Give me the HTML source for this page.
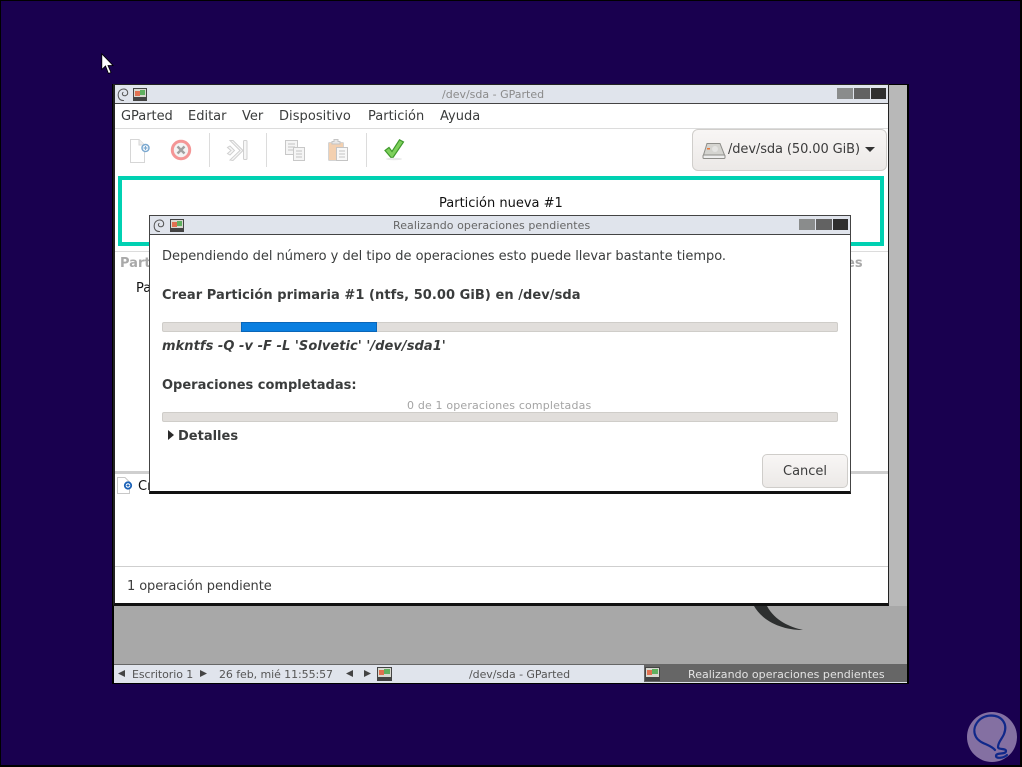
<!DOCTYPE html>
<html><head><meta charset="utf-8">
<style>
html,body{margin:0;padding:0;width:1022px;height:767px;overflow:hidden;background:#19004f}
body{position:relative;font-family:"DejaVu Sans",sans-serif;font-size:13px;color:#3a3c3c}
.a{position:absolute}
.t{position:absolute;white-space:nowrap;line-height:16px}
svg{position:absolute;overflow:visible}
</style></head><body>
<div class="a" style="left:0;top:0;width:1019px;height:764px;border:1px solid #000;border-width:1px 2px 2px 1px"></div>

<!-- VM desktop -->
<div class="a" style="left:112px;top:84px;width:797px;height:600px;background:#000"></div>
<div class="a" style="left:114px;top:85px;width:793px;height:598px;background:#b8b8b8"></div>
<div class="a" style="left:114px;top:606px;width:793px;height:58px;background:#a8a8a8"></div>
<svg style="left:0;top:0" width="1022" height="767"><path d="M754 606C762 620 780 630 803 630C790 627 775 621 767 606Z" fill="#2d2f2f"/></svg>

<!-- taskbar -->
<div class="a" style="left:114px;top:664px;width:793px;height:19px;background:#e0e4ec;border-top:1px solid #666;box-sizing:border-box"></div>
<div class="a" style="left:644px;top:665px;width:263px;height:17px;background:#666"></div>
<svg style="left:118px;top:670px" width="8" height="7"><path d="M0 3.500L7 0V7Z" fill="#444"/></svg>
<div class="t" style="left:132px;top:667px;font-size:11px;color:#555;letter-spacing:-.08px">Escritorio 1</div>
<svg style="left:200px;top:670px" width="8" height="7"><path d="M7 3.500L0 0V7Z" fill="#444"/></svg>
<div class="t" style="left:219px;top:667px;font-size:11px;color:#555;letter-spacing:-.08px">26 feb, mié 11:55:57</div>
<svg style="left:346px;top:670px" width="8" height="7"><path d="M0 3.500L7 0V7Z" fill="#444"/></svg>
<svg style="left:364px;top:670px" width="8" height="7"><path d="M7 3.500L0 0V7Z" fill="#444"/></svg>
<div class="t" style="left:469px;top:667px;font-size:11px;color:#555;letter-spacing:-.06px">/dev/sda - GParted</div>
<div class="t" style="left:688px;top:667px;font-size:11px;color:#e4e4e4;letter-spacing:.04px">Realizando operaciones pendientes</div>
<svg style="left:377px;top:667px" width="16" height="14"><rect width="15" height="14" fill="#444"/><rect x="1" y="1" width="13" height="9" fill="#d8d8d0"/><rect x="2" y="3" width="5" height="5" fill="#e07050"/><rect x="7" y="2" width="6" height="5" fill="#60b060"/></svg>
<svg style="left:645px;top:667px" width="16" height="14"><rect width="15" height="14" fill="#444"/><rect x="1" y="1" width="13" height="9" fill="#d8d8d0"/><rect x="2" y="3" width="5" height="5" fill="#e07050"/><rect x="7" y="2" width="6" height="5" fill="#60b060"/></svg>

<!-- main window -->
<div class="a" style="left:113px;top:84px;width:776px;height:522px;background:#fff;border:1px solid #222;border-bottom:3px solid #111;border-left-width:2px;border-right-width:1px;box-sizing:border-box"></div>
<div class="a" style="left:115px;top:85px;width:773px;height:18px;background:#e0e4ec;border-bottom:1px solid #444"></div>
<svg style="left:117px;top:88px" width="12" height="14" fill="none" stroke="#555" stroke-width="1"><path d="M7 12.500C3 13 1 10 1.200 6.500C1.400 3 4 .8 7 1C9.800 1.200 11 3.500 10.600 5.600C10.200 7.600 7.500 8.400 6 7.200C5 6.400 5.200 4.800 6.400 4.200"/></svg>
<svg style="left:133px;top:88px" width="14" height="13"><rect width="14" height="13" fill="#444"/><rect x="1" y="1" width="12" height="8" fill="#d8d8d0"/><rect x="2" y="3" width="5" height="5" fill="#e07050"/><rect x="7" y="2" width="5" height="5" fill="#60b060"/></svg>
<div class="t" style="left:442px;top:87px;font-size:11px;color:#8a8a8a">/dev/sda - GParted</div>
<div class="a" style="left:837px;top:88px;width:16px;height:11px;background:#8a8c8c"></div>
<div class="a" style="left:854px;top:88px;width:16px;height:11px;background:#626262"></div>
<div class="a" style="left:871px;top:88px;width:15px;height:11px;background:#2f2f2f"></div>

<!-- menu -->
<div class="t" style="left:121px;top:109px;letter-spacing:-.03px">GParted</div>
<div class="t" style="left:188px;top:109px">Editar</div>
<div class="t" style="left:242px;top:109px">Ver</div>
<div class="t" style="left:279px;top:109px;letter-spacing:.05px">Dispositivo</div>
<div class="t" style="left:368px;top:109px">Partición</div>
<div class="t" style="left:440px;top:109px">Ayuda</div>
<div class="a" style="left:115px;top:128px;width:773px;height:1px;background:#dcdcdc"></div>

<!-- toolbar -->
<svg style="left:128px;top:138px" width="24" height="26"><path d="M2.500 1.500H11L16.500 7V24.500H2.500Z" fill="#fff" stroke="#d6d6d6"/><path d="M11 1.500V7H16.500" fill="#eee" stroke="#d6d6d6"/><circle cx="17.500" cy="10" r="3.500" fill="#fff" stroke="#7aa8d0" stroke-width="1.500"/><path d="M15.500 10H19.500M17.500 8V12" stroke="#7aa8d0" stroke-width="1.200"/></svg>
<svg style="left:170px;top:139px" width="22" height="24"><circle cx="11" cy="11" r="8.700" fill="#f3f3f3" stroke="#f49696" stroke-width="3"/><path d="M7.500 7.500L14.500 14.500M14.500 7.500L7.500 14.500" stroke="#a0a0a0" stroke-width="2.400"/></svg>
<div class="a" style="left:209px;top:133px;width:1px;height:34px;background:#dcdcdc"></div>
<svg style="left:226px;top:139px" width="22" height="24" fill="#f6f6f6" stroke="#d0d0d0"><path d="M1.500 8.500L5 11.500L1.500 14.500L4 16L8.500 11.500L4 7Z"/><path d="M4 1.500L14 11.500L4 21L7 21.500L17 11.500L7 1.500Z"/><rect x="17.500" y="1.500" width="3.500" height="19" rx="1"/></svg>
<div class="a" style="left:266px;top:133px;width:1px;height:34px;background:#dcdcdc"></div>
<svg style="left:285px;top:140px" width="22" height="22" fill="#f5f5f5" stroke="#c8c8c8"><rect x=".5" y=".5" width="12" height="14"/><path d="M3 4H10M3 7H10M3 10H10" stroke="#c4c4c4"/><rect x="8.500" y="7.500" width="11" height="13"/><path d="M11 11H17M11 14H17M11 17H17" stroke="#c4c4c4"/></svg>
<svg style="left:328px;top:139px" width="22" height="23"><rect x=".5" y="3.500" width="15" height="18" rx="1" fill="#f3d0b0" stroke="#d4d4d4"/><path d="M4 5V2.500H6V.5H10V2.500H12V5Z" fill="#e8e8e8" stroke="#c4c4c4"/><rect x="8.500" y="8.500" width="11" height="13" fill="#f8f8f8" stroke="#c4c4c4"/><path d="M11 12H17M11 15H17M11 18H17" stroke="#c4c4c4"/></svg>
<div class="a" style="left:366px;top:133px;width:1px;height:34px;background:#dcdcdc"></div>
<svg style="left:384px;top:139px" width="22" height="22"><path d="M1 11.500L5 8.500L8 12.500L15.500 .8L19.500 3L9 18.500H7Z" fill="#7ed05c" stroke="#3f9a2c" stroke-width="1.200"/><ellipse cx="10" cy="20" rx="8" ry="1.300" fill="#e8e8e8"/></svg>

<!-- device combo -->
<div class="a" style="left:692px;top:129px;width:195px;height:42px;box-sizing:border-box;background:linear-gradient(#f8f6f5,#ece9e7);border:1px solid #d0cecb;border-radius:6px"></div>
<svg style="left:702px;top:142px" width="24" height="18"><path d="M5 1.500H18L22.500 13H1.500Z" fill="#d4d4d0" stroke="#8e8e8a"/><rect x="1" y="13" width="22" height="3.500" rx="1" fill="#eee" stroke="#8e8e8a"/><rect x="5" y="6" width="3" height="1.500" fill="#e8783a"/><circle cx="13" cy="7" r="3" fill="#e4e4e2"/></svg>
<div class="t" style="left:728px;top:142px;color:#3c3c3c;letter-spacing:-.1px">/dev/sda (50.00 GiB)</div>
<svg style="left:865px;top:147px" width="10" height="5"><path d="M0 0H10L5 5Z" fill="#333"/></svg>

<!-- graph -->
<div class="a" style="left:118px;top:176px;width:766px;height:70px;box-sizing:border-box;border:4px solid #00d1b2"></div>
<div class="t" style="left:439px;top:196px;color:#111">Partición nueva #1</div>

<!-- table -->
<div class="a" style="left:115px;top:251px;width:773px;height:1px;background:#dcdcdc"></div>
<div class="t" style="left:120px;top:256px;font-weight:bold;color:#a9a9a9">Part</div>
<div class="t" style="left:846px;top:256px;font-weight:bold;color:#a9a9a9">es</div>
<div class="t" style="left:136px;top:281px;color:#111">Pa</div>

<!-- lower pane -->
<div class="a" style="left:115px;top:471px;width:773px;height:3px;background:#cfcfcf"></div>
<svg style="left:117px;top:477px" width="16" height="18"><path d="M.5.5H8L12.500 5V16.500H.5Z" fill="#fff" stroke="#c8c8c8"/><circle cx="11" cy="8.500" r="3.200" fill="#fff" stroke="#1a62b8" stroke-width="1.800"/><path d="M9.500 8.500H12.500M11 7V10" stroke="#1a62b8" stroke-width="1"/></svg>
<div class="t" style="left:138px;top:479px;color:#111">Cr</div>
<div class="a" style="left:115px;top:566px;width:773px;height:1px;background:#cfcfcf"></div>
<div class="t" style="left:127px;top:579px;color:#3c3c3c;letter-spacing:-.1px">1 operación pendiente</div>

<!-- dialog -->
<div class="a" style="left:149px;top:215px;width:702px;height:279px;box-sizing:border-box;background:#fff;border:1px solid #444;border-bottom:3px solid #111"></div>
<div class="a" style="left:150px;top:216px;width:700px;height:18px;background:#e0e4ec;border-bottom:1px solid #444"></div>
<svg style="left:153px;top:219px" width="12" height="14" fill="none" stroke="#555" stroke-width="1"><path d="M7 12.500C3 13 1 10 1.200 6.500C1.400 3 4 .8 7 1C9.800 1.200 11 3.500 10.600 5.600C10.200 7.600 7.500 8.400 6 7.200C5 6.400 5.200 4.800 6.400 4.200"/></svg>
<svg style="left:170px;top:219px" width="14" height="13"><rect width="14" height="13" fill="#444"/><rect x="1" y="1" width="12" height="8" fill="#d8d8d0"/><rect x="2" y="3" width="5" height="5" fill="#e07050"/><rect x="7" y="2" width="5" height="5" fill="#60b060"/></svg>
<div class="t" style="left:393px;top:218px;font-size:11px;color:#666;letter-spacing:.06px">Realizando operaciones pendientes</div>
<div class="a" style="left:799px;top:219px;width:16px;height:11px;background:#8a8c8c"></div>
<div class="a" style="left:816px;top:219px;width:16px;height:11px;background:#626262"></div>
<div class="a" style="left:833px;top:219px;width:15px;height:11px;background:#2f2f2f"></div>

<div class="t" style="left:162px;top:249px;letter-spacing:-.024px">Dependiendo del número y del tipo de operaciones esto puede llevar bastante tiempo.</div>
<div class="t" style="left:162px;top:288px;font-weight:bold;letter-spacing:.055px">Crear Partición primaria #1 (ntfs, 50.00 GiB) en /dev/sda</div>
<div class="a" style="left:162px;top:322px;width:676px;height:10px;box-sizing:border-box;background:#e1dedb;border:1px solid #cfcdc9;border-radius:2px"></div>
<div class="a" style="left:241px;top:322px;width:136px;height:10px;box-sizing:border-box;background:#0a7fe0;border:1px solid #0a66b8"></div>
<div class="t" style="left:162px;top:339px;font-weight:bold;font-style:italic;letter-spacing:.05px">mkntfs -Q -v -F -L 'Solvetic' '/dev/sda1'</div>
<div class="t" style="left:162px;top:378px;font-weight:bold">Operaciones completadas:</div>
<div class="t" style="left:407px;top:398px;font-size:11px;color:#a4a4a4;letter-spacing:.16px">0 de 1 operaciones completadas</div>
<div class="a" style="left:162px;top:412px;width:676px;height:10px;box-sizing:border-box;background:#e1dedb;border:1px solid #cfcdc9;border-radius:2px"></div>
<svg style="left:168px;top:430px" width="6" height="10"><path d="M0 0L6 5L0 10Z" fill="#2a2a2a"/></svg>
<div class="t" style="left:178px;top:429px;font-weight:bold">Detalles</div>
<div class="a" style="left:762px;top:454px;width:86px;height:34px;box-sizing:border-box;background:linear-gradient(#f8f6f5,#ece9e7);border:1px solid #cfcdca;border-radius:5px"></div>
<div class="t" style="left:783px;top:464px;color:#3c3c3c">Cancel</div>

<!-- cursor -->
<svg style="left:101px;top:53px" width="14" height="22"><path d="M.8.8V16.500L4.500 13L7.500 20.500L10 19.500L7 12.500H12Z" fill="#fff" stroke="#000" stroke-width=".8"/></svg>

<!-- watermark -->
<svg style="left:966px;top:711px" width="52" height="52"><circle cx="26" cy="26" r="25" fill="#8470a2"/><path d="M29 39C24 33 14 33 10 26C5 17 12 5 25 4.500C36 4.500 42 13 38 23C36 28 32 31 32 36C32 39 40 37 40 40C40 44 30 41 30 45C30 48 38 47 41 44" fill="none" stroke="#10288a" stroke-width="2.200" stroke-linecap="round"/></svg>
</body></html>
